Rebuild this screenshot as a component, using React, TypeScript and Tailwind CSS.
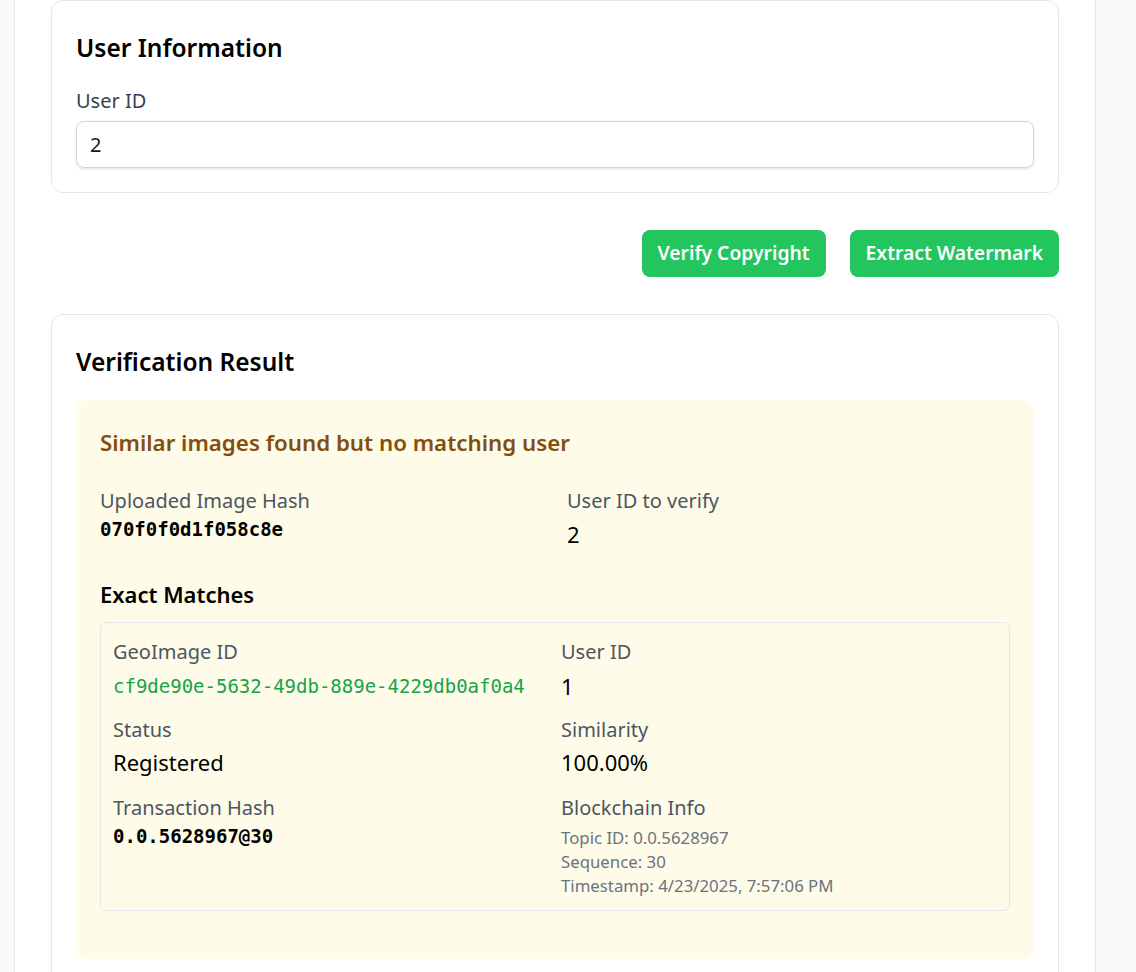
const sans = { fontFamily: '"Noto Sans", "Open Sans", sans-serif' }
const mono = { fontFamily: '"DejaVu Sans Mono", "Liberation Mono", monospace' }

function Field({ label, children }: { label: string; children: React.ReactNode }) {
  return (
    <div>
      <p className="text-[20px] leading-[28px] text-[#4b5563]">{label}</p>
      {children}
    </div>
  )
}

export default function App() {
  return (
    <div className="min-h-screen bg-[#f9fafb] flex" style={sans}>
      <div className="ml-[14px] w-[1082px] bg-white border-x border-[#e5e7eb] px-9 min-h-screen">
        <div className="bg-white border border-[#e5e7eb] rounded-xl px-6 pt-[29px] pb-6">
          <h2 className="text-[24.5px] leading-[36px] font-semibold text-black">User Information</h2>
          <label className="block mt-[21px] text-[20px] leading-[28px] text-[#374151]">User ID</label>
          <input
            defaultValue="2"
            className="mt-[6px] w-full h-[47px] px-[13px] rounded-lg border border-[#d1d5db] shadow-sm text-[20px] text-[#111827] outline-none"
          />
        </div>

        <div className="flex justify-end gap-6 mt-[37px]">
          <button className="h-[47px] px-4 rounded-lg bg-[#22c55e] text-white text-[19.3px] font-semibold">
            Verify Copyright
          </button>
          <button className="h-[47px] px-4 rounded-lg bg-[#22c55e] text-white text-[19.3px] font-semibold">
            Extract Watermark
          </button>
        </div>

        <div className="mt-[37px] bg-white border border-[#e5e7eb] rounded-xl px-6 pt-[29px] pb-6">
          <h2 className="text-[24.5px] leading-[36px] font-semibold text-black">Verification Result</h2>
          <div className="mt-[20px] bg-[#fefce8] rounded-xl p-6">
            <h3 className="text-[22.3px] leading-[38px] font-semibold text-[#854d0e]">
              Similar images found but no matching user
            </h3>
            <div className="grid grid-cols-2 gap-6 mt-[25px]">
              <Field label="Uploaded Image Hash">
                <p className="font-semibold text-[19px] leading-[28px] text-black" style={mono}>070f0f0d1f058c8e</p>
              </Field>
              <Field label="User ID to verify">
                <p className="text-[22px] leading-[38px] text-black">2</p>
              </Field>
            </div>

            <h3 className="mt-[25px] text-[22px] leading-[32px] font-semibold text-black">Exact Matches</h3>
            <div className="mt-3 mb-6 border border-[#e5e7eb] rounded-md px-3 pt-[15px] pb-3">
              <div className="grid grid-cols-2 gap-x-3 gap-y-[14px]">
                <Field label="GeoImage ID">
                  <p className="mt-1 text-[19px] leading-[32px] text-[#16a34a]" style={mono}>
                    cf9de90e-5632-49db-889e-4229db0af0a4
                  </p>
                </Field>
                <Field label="User ID">
                  <p className="mt-1 text-[22px] leading-[32px] text-black">1</p>
                </Field>
                <Field label="Status">
                  <p className="mt-[2px] mb-[2px] text-[22px] leading-[32px] text-black">Registered</p>
                </Field>
                <Field label="Similarity">
                  <p className="mt-[2px] mb-[2px] text-[22px] leading-[32px] text-black">100.00%</p>
                </Field>
                <Field label="Transaction Hash">
                  <p className="font-semibold text-[19px] leading-[28px] text-black" style={mono}>0.0.5628967@30</p>
                </Field>
                <Field label="Blockchain Info">
                  <div className="mt-[4px] text-[16.8px] leading-[24px] text-[#6b7280]">
                    <p>Topic ID: 0.0.5628967</p>
                    <p>Sequence: 30</p>
                    <p>Timestamp: 4/23/2025, 7:57:06 PM</p>
                  </div>
                </Field>
              </div>
            </div>
          </div>
        </div>
      </div>
    </div>
  )
}
